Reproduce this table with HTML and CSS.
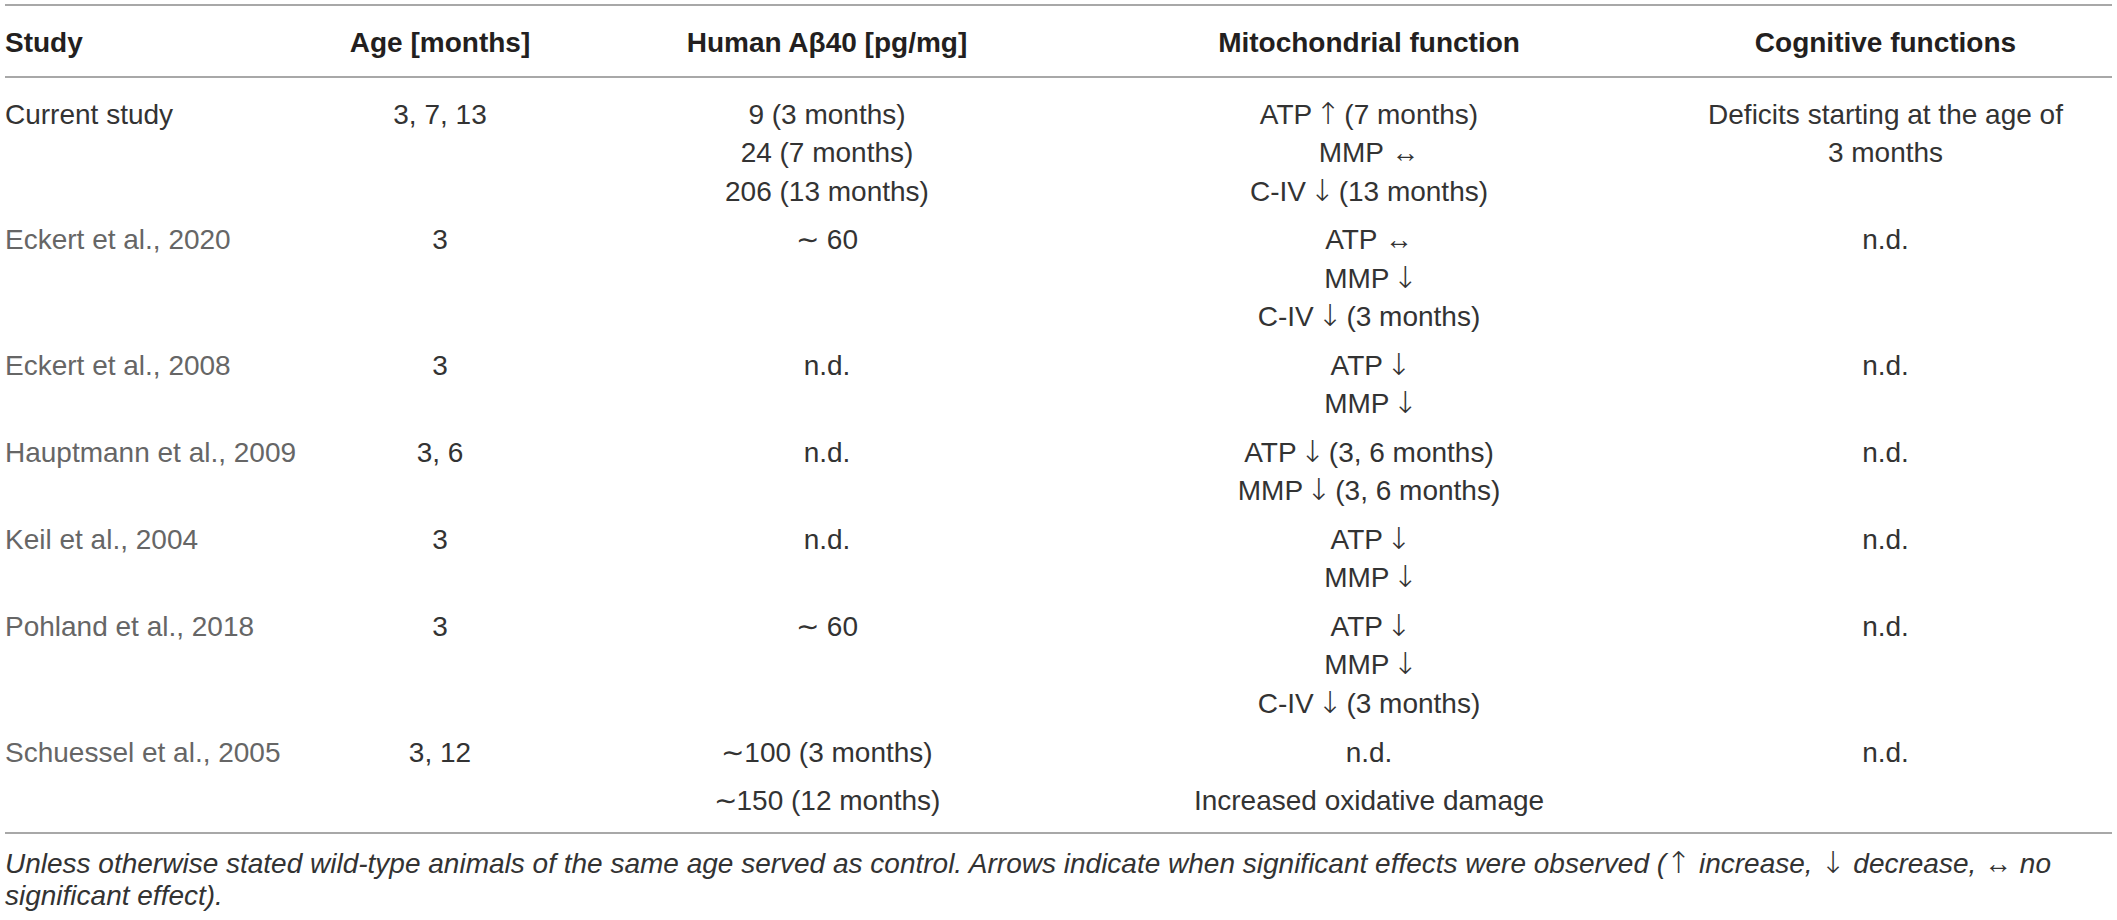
FILE: index.html
```html
<!DOCTYPE html>
<html lang="en">
<head>
    <meta charset="UTF-8">
    <title>Table – Mitochondrial and cognitive findings</title>
    <link rel="stylesheet" href="styles.css">
</head>
<body>
    <table class="data">
        <colgroup>
            <col class="c-study">
            <col class="c-age">
            <col class="c-abeta">
            <col class="c-mito">
            <col class="c-cog">
        </colgroup>
        <thead>
            <tr>
                <th class="left">Study</th>
                <th>Age [months]</th>
                <th>Human Aβ40 [pg/mg]</th>
                <th>Mitochondrial function</th>
                <th>Cognitive functions</th>
            </tr>
        </thead>
        <tbody>
            <tr class="first">
                <td class="left study current">Current study</td>
                <td>3, 7, 13</td>
                <td>
                    <div>9 (3 months)</div>
                    <div>24 (7 months)</div>
                    <div>206 (13 months)</div>
                </td>
                <td>
                    <div>ATP <span class="arr">↑</span> (7 months)</div>
                    <div>MMP ↔</div>
                    <div>C-IV <span class="arr">↓</span> (13 months)</div>
                </td>
                <td>Deficits starting at the age of 3&nbsp;months</td>
            </tr>
            <tr>
                <td class="left study">Eckert et al., 2020</td>
                <td>3</td>
                <td>∼ 60</td>
                <td>
                    <div>ATP ↔</div>
                    <div>MMP <span class="arr">↓</span></div>
                    <div>C-IV <span class="arr">↓</span> (3 months)</div>
                </td>
                <td>n.d.</td>
            </tr>
            <tr>
                <td class="left study">Eckert et al., 2008</td>
                <td>3</td>
                <td>n.d.</td>
                <td>
                    <div>ATP <span class="arr">↓</span></div>
                    <div>MMP <span class="arr">↓</span></div>
                </td>
                <td>n.d.</td>
            </tr>
            <tr>
                <td class="left study">Hauptmann et al., 2009</td>
                <td>3, 6</td>
                <td>n.d.</td>
                <td>
                    <div>ATP <span class="arr">↓</span> (3, 6 months)</div>
                    <div>MMP <span class="arr">↓</span> (3, 6 months)</div>
                </td>
                <td>n.d.</td>
            </tr>
            <tr>
                <td class="left study">Keil et al., 2004</td>
                <td>3</td>
                <td>n.d.</td>
                <td>
                    <div>ATP <span class="arr">↓</span></div>
                    <div>MMP <span class="arr">↓</span></div>
                </td>
                <td>n.d.</td>
            </tr>
            <tr>
                <td class="left study">Pohland et al., 2018</td>
                <td>3</td>
                <td>∼ 60</td>
                <td>
                    <div>ATP <span class="arr">↓</span></div>
                    <div>MMP <span class="arr">↓</span></div>
                    <div>C-IV <span class="arr">↓</span> (3 months)</div>
                </td>
                <td>n.d.</td>
            </tr>
            <tr class="last">
                <td class="left study">Schuessel et al., 2005</td>
                <td>3, 12</td>
                <td>
                    <div>∼100 (3 months)</div>
                    <div class="para">∼150 (12 months)</div>
                </td>
                <td>
                    <div>n.d.</div>
                    <div class="para">Increased oxidative damage</div>
                </td>
                <td>n.d.</td>
            </tr>
        </tbody>
    </table>

    <p class="note">Unless otherwise stated wild-type animals of the same age served as control. Arrows indicate when significant effects were observed (<span class="arr">↑</span> increase, <span class="arr">↓</span> decrease, ↔ no significant effect).</p>
</body>
</html>
```

FILE: styles.css
```css
body {
    margin: 0;
    padding: 0 5px;
    background: #fff;
    font-family: "Liberation Sans", Arial, sans-serif;
    color: #333;
}
.data {
    width: 100%;
    margin-top: 4px;
    border-collapse: collapse;
    table-layout: fixed;
    font-size: 28px;
    line-height: 38.5px;
}
.c-study { width: 300px; }
.c-age { width: 270px; }
.c-abeta { width: 504px; }
.c-mito { width: 580px; }
.c-cog { width: 453px; }

thead th {
    font-weight: bold;
    color: #231f20;
    text-align: center;
    padding: 18px 0 13px;
    border-top: 2px solid #a8a8a8;
    border-bottom: 2px solid #a8a8a8;
}
td {
    text-align: center;
    vertical-align: top;
    padding: 5px 0 5px;
}
.left {
    text-align: left;
}
.study {
    color: #666;
}
.study.current {
    color: #333;
}
tr.first td {
    padding-top: 18px;
}
tr.last td {
    padding-top: 6px;
    padding-bottom: 11px;
    border-bottom: 2px solid #a8a8a8;
}
.para {
    margin-top: 9.5px;
}
/* up/down arrows are tall and thin in the original */
.arr {
    font-family: "DejaVu Sans", sans-serif;
    font-weight: 200;
    font-size: 30px;
    line-height: 0;
    margin: 0 -4px;
}
.note {
    margin: 14px 0 0;
    font-size: 28px;
    line-height: 32px;
    font-style: italic;
    color: #333;
}
.note .arr {
    font-style: normal;
    margin: 0;
}
```
